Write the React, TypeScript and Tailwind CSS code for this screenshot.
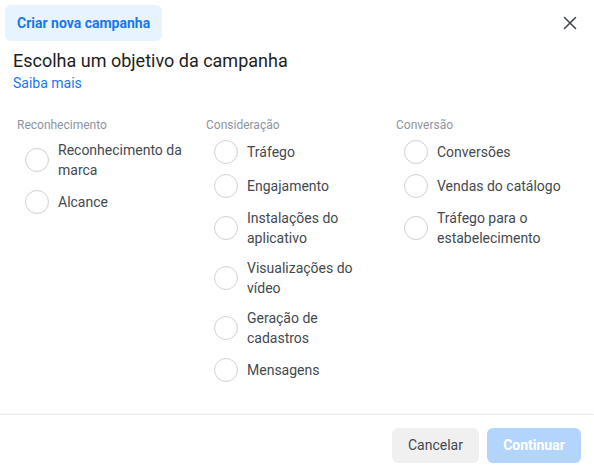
import React from "react";

type Group = { title: string; items: string[] };

const groups: Group[] = [
  { title: "Reconhecimento", items: ["Reconhecimento da marca", "Alcance"] },
  {
    title: "Consideração",
    items: [
      "Tráfego",
      "Engajamento",
      "Instalações do aplicativo",
      "Visualizações do vídeo",
      "Geração de cadastros",
      "Mensagens",
    ],
  },
  {
    title: "Conversão",
    items: ["Conversões", "Vendas do catálogo", "Tráfego para o estabelecimento"],
  },
];

const Radio: React.FC<{ label: string }> = ({ label }) => (
  <label className="flex items-center gap-[9px] pl-2 cursor-pointer">
    <span className="w-6 h-6 shrink-0 rounded-full border border-[#cfd1d4] bg-white" />
    <span className="w-[128px] text-[14px] leading-5 text-[#444950]">{label}</span>
  </label>
);

export default function App() {
  return (
    <div
      className="w-[594px] h-[473px] bg-white flex flex-col"
      style={{ fontFamily: "Roboto, 'Liberation Sans', sans-serif" }}
    >
      <div className="flex items-start justify-between pl-[5px] pr-4 pt-[5px]">
        <div className="h-9 px-3 flex items-center rounded-md bg-[#e7f3ff] text-[14px] font-bold text-[#1877f2]">
          Criar nova campanha
        </div>
        <button className="mt-[10px] w-4 h-4 flex items-center justify-center text-[#444950]">
          <svg width="14" height="14" viewBox="0 0 14 14" fill="none">
            <path d="M1.5 1.5L12.5 12.5M12.5 1.5L1.5 12.5" stroke="currentColor" strokeWidth="1.6" strokeLinecap="round" />
          </svg>
        </button>
      </div>

      <div className="px-[13px] mt-[8px]">
        <h1 className="text-[18px] leading-[24px] text-[#1c1e21]">Escolha um objetivo da campanha</h1>
        <a className="block text-[14px] leading-5 text-[#1877f2] cursor-pointer">Saiba mais</a>
      </div>

      <div className="grid grid-cols-[189px_190px_190px] pl-[17px] mt-[24px]">
        {groups.map((g) => (
          <div key={g.title} className="flex flex-col">
            <div className="text-[12px] leading-4 text-[#8d949e] mb-[7px]">{g.title}</div>
            <div className="flex flex-col gap-[10px]">
              {g.items.map((it) => (
                <Radio key={it} label={it} />
              ))}
            </div>
          </div>
        ))}
      </div>

      <div className="mt-auto border-t border-[#ebebeb] shadow-[0_-1px_2px_rgba(0,0,0,0.03)] flex justify-end gap-2 pr-[13px] pt-[13px] pb-[10px]">
        <button className="h-[35px] w-[87px] rounded-md bg-[#f0f0f0] text-[14px] text-[#444950]">
          Cancelar
        </button>
        <button className="h-[35px] w-[94px] rounded-md bg-[#b3d5fd] text-[14px] font-bold text-white">
          Continuar
        </button>
      </div>
    </div>
  );
}
